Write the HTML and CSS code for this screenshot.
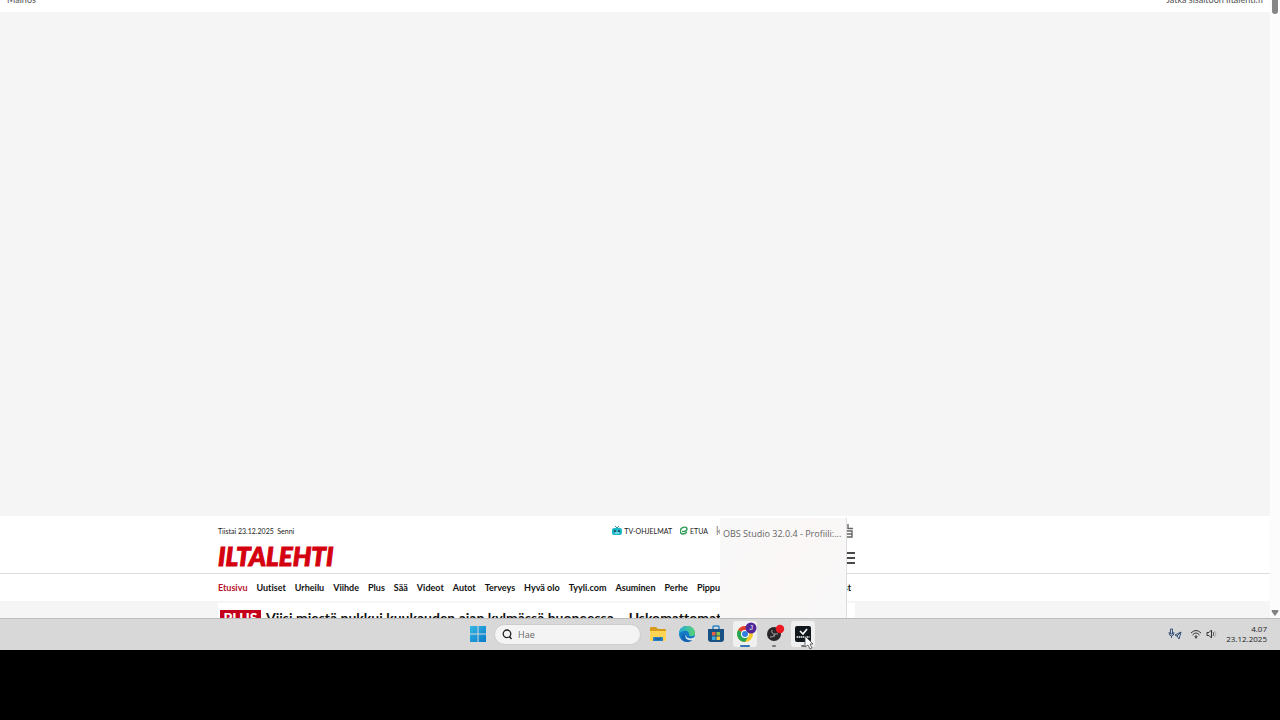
FILE: index.html
```html
<!DOCTYPE html>
<html lang="fi">
<head>
<meta charset="utf-8">
<title>Iltalehti</title>
<link rel="stylesheet" href="styles.css">
</head>
<body>
<main class="screen">
  <div class="browser">
    <div class="page">
      <div class="ad-bar"><span>Mainos</span><a href="#site">Jatka sisältöön Iltalehti.fi</a></div>
      <div class="ad"></div>
      <header class="site" id="site">
        <div class="column top-row">
          <span class="date">Tiistai 23.12.2025&nbsp; Senni</span>
          <a class="service" href="#tv"><svg width="10" height="10" viewBox="0 0 10 10"><path d="M3 0l2 2 2-2" fill="none" stroke="#2798a5"/><rect y="2" width="10" height="7" rx="2" fill="#20b5c7"/><path d="M2 4h2v2H2zM6 4h2v2H6z" fill="#17606b"/><path d="M3 7h4" stroke="#c9f3f4"/></svg>TV-OHJELMAT</a>
          <a class="service" href="#etua"><svg width="8" height="10" viewBox="0 0 8 10"><path d="M2 5.500C5 5.500 7 5 7 3S3 0 1 3s0 5 2 5 3-1 4-2" fill="none" stroke="#2d9b55" stroke-width="1.4"/></svg>ETUA</a>
          <span class="more">k</span>
          <svg class="side-icon" width="9" height="14" viewBox="0 0 9 14"><path d="M3 0v4.500h5M2 7h5v6H2M2 10h5" fill="none" stroke="#666" stroke-width="1.4"/></svg>
        </div>
        <div class="column brand-row">
          <a class="brand" href="#home">ILTALEHTI</a>
          <button class="menu" aria-label="Valikko"><svg width="10" height="12" viewBox="0 0 10 12"><path d="M0 1h10M0 6h10M0 11h10" stroke="#111" stroke-width="1.6"/></svg></button>
        </div>
      </header>
      <nav class="column nav">
        <a class="current" href="#1">Etusivu</a><a href="#2">Uutiset</a><a href="#3">Urheilu</a><a href="#4">Viihde</a><a href="#5">Plus</a><a href="#6">Sää</a><a href="#7">Videot</a><a href="#8">Autot</a><a href="#9">Terveys</a><a href="#10">Hyvä olo</a><a href="#11">Tyyli.com</a><a href="#12">Asuminen</a><a href="#13">Perhe</a><a href="#14">Pippuri</a><a class="last" href="#15">Podcast</a>
      </nav>
      <section class="stories">
        <article class="column story"><span class="plus">PLUS</span><h1>Viisi miestä nukkui kuukauden ajan kylmässä huoneessa – Uskomattomat</h1></article>
      </section>
    </div>
    <div class="scrollbar"><span class="thumb"></span><svg width="8" height="6" viewBox="0 0 8 6"><path d="M1 0h6q1 0 0 2L4 6 1 2Q0 0 1 0" fill="#828282"/></svg></div>
    <div class="preview">OBS Studio 32.0.4 - Profiili:...</div>
  </div>
  <footer class="taskbar">
    <div class="apps">
      <button class="start" aria-label="Käynnistä"><svg width="16" height="16" viewBox="0 0 16 16"><defs><linearGradient id="w" x2="1" y2="1"><stop stop-color="#35b7e6"/><stop offset="1" stop-color="#087bc8"/></linearGradient></defs><path d="M0 0h7.5v7.5H0zM8.500 0H16v7.500H8.500zM0 8.500h7.500V16H0zM8.500 8.500H16V16H8.500z" fill="url(#w)"/></svg></button>
      <label class="search"><svg width="11" height="11" viewBox="0 0 11 11"><circle cx="6" cy="4.800" r="3.800" fill="none" stroke="#222" stroke-width="1.300"/><path d="M8.400 7.500L10.500 10" stroke="#222" stroke-width="1.500"/></svg><input type="text" placeholder="Hae" aria-label="Hae"></label>
      <button class="app" aria-label="Resurssienhallinta"><svg width="18" height="18" viewBox="0 0 18 18"><path d="M1 3q0-1 1-1h5l2 2h7q1 0 1 1v9H1z" fill="#d69b19"/><path d="M1 6h16v9q0 1-1 1H2q-1 0-1-1z" fill="#ffd354"/><path d="M4 16v-3q0-1 1-1h8q1 0 1 1v3z" fill="#2580c5"/><path d="M6 14h6" stroke="#144f8a"/></svg></button>
      <button class="app" aria-label="Edge"><svg width="18" height="18" viewBox="0 0 18 18"><defs><linearGradient id="e" x2="1"><stop stop-color="#23a9df"/><stop offset="1" stop-color="#59d36f"/></linearGradient></defs><circle cx="9" cy="9" r="8" fill="#1479c7"/><path d="M1 9C1-2 17-1 17 8c0 4-5 4-6 2 1-5-6-6-10-1" fill="url(#e)"/><path d="M7 9c-2 4 2 7 8 5-2 3-6 4-9 2-3-2-3-6 1-7" fill="#1461b0"/><path d="M8 9c-1 4 4 6 9 3v2l-2 1c-5 1-9-1-7-6" fill="#e0e6ea"/></svg></button>
      <button class="app" aria-label="Store"><svg width="18" height="18" viewBox="0 0 18 18"><path d="M6 5V2q0-1 1-1h4q1 0 1 1v3" fill="none" stroke="#2686cc" stroke-width="1.500"/><path d="M1 4h16v10q0 3-3 3H4q-3 0-3-3z" fill="#185184"/><path d="M5 7h3.500v3.500H5z" fill="#ee6244"/><path d="M9.500 7H13v3.500H9.500z" fill="#8bc34a"/><path d="M5 11.500h3.500V15H5z" fill="#36afe5"/><path d="M9.500 11.500H13V15H9.500z" fill="#ffc83e"/></svg></button>
      <button class="app active chrome" aria-label="Chrome"><svg width="24" height="24" viewBox="0 0 24 24"><circle cx="12" cy="12" r="8" fill="#f8c828"/><path d="M5.100 8A8 8 0 0 1 18.900 8H12v4z" fill="#e64032"/><path d="M5.100 8A8 8 0 0 0 12 20l3.500-6-3.500-2z" fill="#27a653"/><circle cx="12" cy="12" r="4" fill="#fff"/><circle cx="12" cy="12" r="3" fill="#337fe0"/><circle cx="18" cy="6" r="5.500" fill="#502699"/></svg><span class="profile">J</span></button>
      <button class="app running" aria-label="OBS"><svg width="24" height="24" viewBox="0 0 24 24"><circle cx="12" cy="12" r="7" fill="#282629"/><g fill="none" stroke="#a8a4a6" stroke-width="1"><path d="M10 8q-1 4 3 4M16 12q-4-1-4 3M8 15q3 1 5-3"/></g><circle cx="18" cy="7" r="4.200" fill="#ed1721"/></svg></button>
      <button class="app active running" aria-label="Verisure"><svg width="24" height="24" viewBox="0 0 24 24"><rect x="4" y="4" width="16" height="16" rx="2" fill="#11181d"/><path d="M9 9l3 3 4-5" fill="none" stroke="#fff" stroke-width="1.600"/><path d="M5.500 15h13" stroke="#b6babb" stroke-width="2" stroke-dasharray="1.500 .5"/></svg></button>
    </div>
    <div class="tray">
      <svg width="14" height="12" viewBox="0 0 14 12"><g fill="none" stroke="#365278"><path d="M2.500 1h2v5h-2zM1 4q0 4 2.500 4T6 4M3.500 8v2M7 7l6-3-2 7-2-3zM9 8l4-4"/></g></svg>
      <svg class="wifi" width="12" height="10" viewBox="0 0 12 10"><g fill="none" stroke="#333"><path d="M1 4q5-5 10 0M2.500 6q3.500-4 7 0M4.500 7.500q1.500-1.500 3 0"/></g><circle cx="6" cy="8.500" r="1" fill="#333"/></svg>
      <svg width="12" height="10" viewBox="0 0 12 10"><path d="M1 3.500h2L5.500 1v8L3 6.500H1z" fill="none" stroke="#333"/><path d="M7 3q1.500 2 0 4" fill="none" stroke="#555"/><path d="M8.500 2q3 3 0 6" fill="none" stroke="#aaa"/></svg>
      <div class="clock"><time>4.07</time><time>23.12.2025</time></div>
    </div>
  </footer>
  <svg class="cursor" width="10" height="15" viewBox="0 0 10 15"><path d="M1 1v11l3-2 2 4 2-1-2-4h3z" fill="#fff" stroke="#444" stroke-width=".8"/></svg>
</main>
</body>
</html>
```
FILE: styles.css
```css
* { box-sizing: border-box; }
body { margin: 0; background: #000; font-family: "Liberation Sans", sans-serif; font-variant-ligatures: none; }
a { color: inherit; text-decoration: none; }
button { border: 0; padding: 0; background: transparent; font: inherit; }
svg { display: block; flex: none; }
.screen { position: relative; height: calc(100vh - 70px); display: flex; flex-direction: column; overflow: hidden; }
.browser { position: relative; flex: 1; min-height: 0; display: flex; overflow: hidden; background: #fff; }
.page { flex: 1; min-width: 0; display: flex; flex-direction: column; overflow: hidden; font-family: Lato, sans-serif; }
.ad-bar { height: 12px; flex: none; display: flex; justify-content: space-between; align-items: flex-end; padding: 0 7px 6px; font-size: 9px; line-height: 12px; color: #555; }
.ad { flex: 1; background: #f5f5f5; }
.column { width: 637px; max-width: 80%; margin-left: 218px; }
.site { height: 58px; flex: none; border-bottom: 1px solid #ddd; }
.top-row { height: 29px; display: flex; align-items: center; font-size: 7px; color: #222; }
.date { flex: 1; }
.service { display: flex; align-items: center; gap: 2px; margin-right: 8px; }
.more { width: 129px; font-size: 11px; color: #888; }
.side-icon { margin-right: 1px; }
.brand-row { height: 24px; display: flex; align-items: center; justify-content: space-between; }
.brand { color: #d4000f; font-size: 26px; line-height: 24px; padding-bottom: 3px; font-weight: 900; font-style: italic; -webkit-text-stroke: 1px #d4000f; }
.menu { padding-top: 1px; }
.nav { height: 27px; flex: none; display: flex; align-items: center; gap: 9px; font-weight: bold; font-size: 9px; color: #111; white-space: nowrap; }
.current { color: #b90f2b; }
.last { margin-left: auto; margin-right: 4px; }
.stories { height: 17px; flex: none; padding-top: 2px; background: #f5f5f5; overflow: hidden; }
.story { display: flex; align-items: flex-start; gap: 5px; padding: 7px 0 0 2px; background: #fff; white-space: nowrap; }
.plus { width: 41px; background: #c4001a; color: #fff; font-size: 14px; line-height: 16px; font-weight: 900; text-align: center; }
h1 { margin: 0; font-size: 14px; line-height: 15px; color: #111; }
.scrollbar { width: 10px; display: flex; flex-direction: column; align-items: center; justify-content: space-between; padding-bottom: 2px; background: #fcfcfc; }
.thumb { width: 6px; height: 14px; border-radius: 0 0 3px 3px; background: #858585; }
.preview { position: absolute; left: 720px; top: 518px; bottom: 0; width: 127px; padding: 9px 3px; border-right: 1px solid #ddd; background: linear-gradient(120deg, #f8f8f8, #faf7f6, #f8f8f8); font: 9px/14px "Open Sans", sans-serif; color: #666; white-space: nowrap; }
.taskbar { height: 32px; flex: none; display: flex; align-items: center; justify-content: center; position: relative; padding-bottom: 1px; background: #d8d8d8; border-top: 1px solid #bbb; }
.apps { display: flex; align-items: center; margin-left: 5px; }
.start { width: 16px; margin-right: 8px; }
.search { width: 147px; height: 21px; display: flex; align-items: center; gap: 6px; padding: 0 6px; border: 1px solid #ccc; border-radius: 11px; background: #f4f4f4; }
.search input { min-width: 0; flex: 1; border: 0; padding: 0; background: transparent; font: 9px "Open Sans", sans-serif; color: #666; outline: 0; }
.search input::placeholder { color: #666; opacity: 1; }
.app { width: 24px; height: 26px; margin-left: 5px; display: flex; align-items: center; justify-content: center; position: relative; border-radius: 3px; }
.active { background: #f0f0f0; }
.chrome::after, .running::after { content: ""; position: absolute; bottom: 0; width: 4px; height: 2px; border-radius: 1px; background: #777; }
.chrome::after { width: 10px; background: #3676b5; }
.profile { position: absolute; right: 4px; top: 3px; font-size: 7px; line-height: 8px; color: #fff; }
.tray { position: absolute; right: 13px; display: flex; align-items: center; gap: 8px; color: #222; }
.wifi { margin-right: -4px; }
.clock { width: 41px; display: flex; flex-direction: column; align-items: flex-end; font: 8px/10px "Open Sans", sans-serif; }
.cursor { position: absolute; left: 804px; bottom: 0; }
```
